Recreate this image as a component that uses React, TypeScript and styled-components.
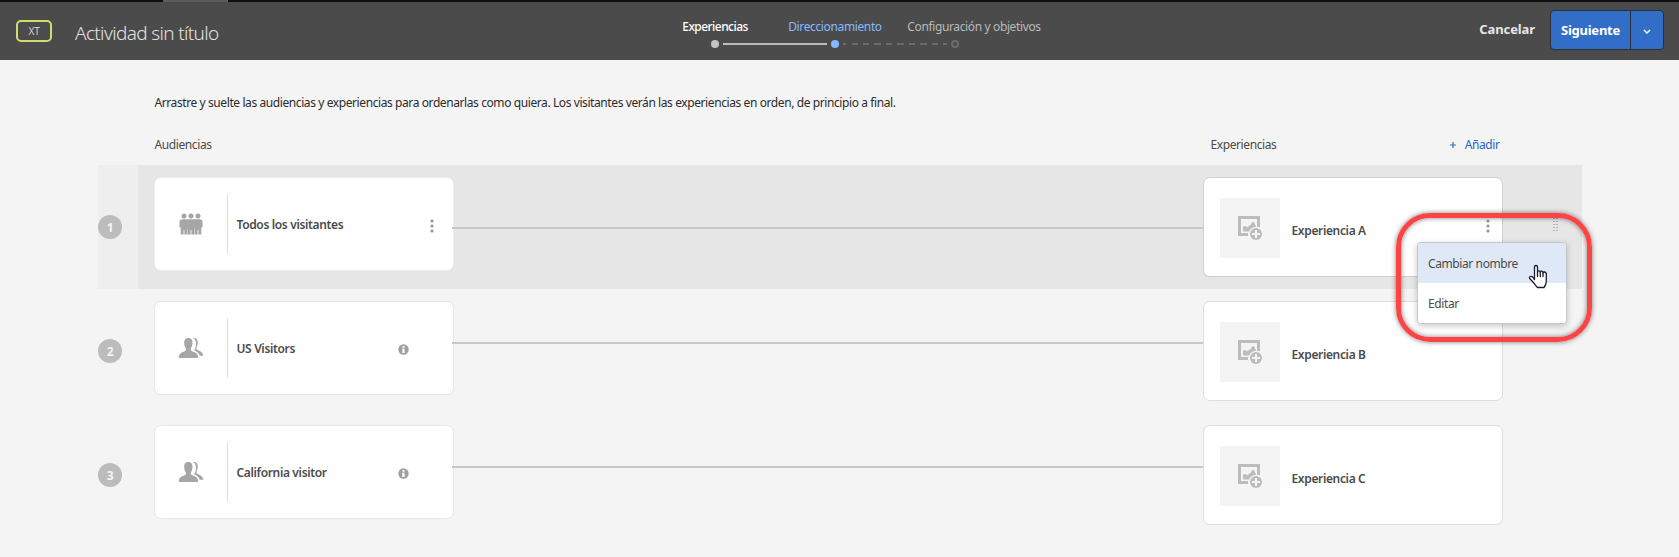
import React from 'react';
import styled, { createGlobalStyle, css } from 'styled-components';

const GlobalStyle = createGlobalStyle`
  * { box-sizing: border-box; }
  body {
    margin: 0;
    background: #f4f4f4;
    color: #4b4b4b;
    font-family: "Noto Sans", "Open Sans", sans-serif;
    font-size: 12px;
    letter-spacing: -0.4px;
    line-height: 18px;
    overflow: hidden;
  }
  button { font: inherit; letter-spacing: inherit; border: 0; background: none; padding: 0; cursor: pointer; }
`;

const Page = styled.div`
  position: relative;
  width: 1679px;
  height: 557px;
  overflow: hidden;
`;

const TabStrip = styled.div`
  height: 2px;
  background: #0e0e0e;
  padding-left: 163px;
`;

const ActiveTab = styled.div`
  width: 65px;
  height: 2px;
  background: #5c5c5c;
`;

const Header = styled.header`
  display: grid;
  grid-template-columns: 655px 360px 1fr;
  height: 58px;
  background: #4b4b4b;
`;

const TitleGroup = styled.div`
  display: flex;
  align-items: flex-start;
  padding: 18px 0 0 16px;
`;

const TypeBadge = styled.span`
  display: flex;
  align-items: center;
  justify-content: center;
  width: 36px;
  height: 22px;
  border: 2px solid #d2dc6e;
  border-radius: 5px;
  color: #d0d0d0;
  font-size: 10px;
  letter-spacing: -0.2px;
`;

const Title = styled.h1`
  margin: 0 0 0 23px;
  color: #e2e2e2;
  font-size: 19px;
  font-weight: 300;
  letter-spacing: -0.65px;
  line-height: 26px;
`;

const Steps = styled.ol`
  display: grid;
  grid-template-columns: repeat(3, 120px);
  margin: 0;
  padding: 16px 0 0;
  list-style: none;
`;

type StepState = 'done' | 'current' | 'pending';
const stepColor = { done: '#ffffff', current: '#83b9ff', pending: '#b9b9b9' };

const Step = styled.li<{ $state: StepState }>`
  display: flex;
  flex-direction: column;
  align-items: center;
  color: ${(p) => stepColor[p.$state]};
  font-weight: ${(p) => (p.$state === 'done' ? 500 : 400)};
  letter-spacing: ${(p) => (p.$state === 'done' ? '-0.55px' : '-0.37px')};
  white-space: nowrap;
`;

const WideLabel = styled.span`
  padding-left: 38px;
`;

const Track = styled.div`
  display: grid;
  grid-template-columns: minmax(0, 1fr) 8px minmax(0, 1fr);
  align-items: center;
  width: 120px;
  height: 8px;
  margin-top: 4px;
`;

const Dot = styled.span<{ $state: StepState }>`
  grid-column: 2;
  grid-row: 1;
  width: 8px;
  height: 8px;
  border-radius: 50%;
  ${(p) =>
    p.$state === 'pending'
      ? css`border: 2px solid #6b6b6b;`
      : css`background: ${p.$state === 'current' ? '#83b9ff' : '#c3c3c3'};`}
`;

const Segment = styled.span<{ $dashed?: boolean }>`
  grid-column: 3;
  grid-row: 1;
  width: 104px;
  height: 2px;
  margin-left: 4px;
  background: ${(p) =>
    p.$dashed
      ? 'repeating-linear-gradient(90deg, #6b6b6b 0 3px, transparent 3px 8.5px, #6b6b6b 8.5px 11.5px)'
      : '#bcbcbc'};
`;

const Actions = styled.div`
  display: flex;
  justify-content: flex-end;
  align-items: flex-start;
  padding: 8px 15px 0 0;
`;

const CancelButton = styled.button`
  height: 40px;
  margin-right: 15px;
  padding-bottom: 2px;
  color: #e6e6e6;
  font-size: 13px;
  font-weight: 700;
  letter-spacing: -0.1px;
`;

const SplitButton = styled.div`
  display: flex;
  width: 114px;
  height: 40px;
  border: 1px solid #2b2f38;
  border-radius: 4px;
  background: #326ec8;
  overflow: hidden;
`;

const NextButton = styled.button`
  width: 80px;
  border-right: 1px solid #2b2f38;
  color: #fff;
  font-size: 13px;
  font-weight: 700;
  letter-spacing: -0.25px;
`;

const NextMenuButton = styled.button`
  display: flex;
  flex: 1;
  align-items: center;
  justify-content: center;
  padding-top: 3px;
`;

const Intro = styled.p`
  margin: 34px 0 0 154.5px;
  color: #2c2c2c;
  letter-spacing: -0.408px;
`;

const ColumnHeads = styled.div`
  display: flex;
  justify-content: space-between;
  width: 1345px;
  margin: 24px 0 11px 154.5px;
`;

const ExperienceHead = styled.div`
  display: flex;
  justify-content: space-between;
  width: 289px;
`;

const AddButton = styled.button`
  display: flex;
  align-items: center;
  gap: 9px;
  color: #2a66c4;
`;

const Rows = styled.main`
  width: 1484px;
  margin-left: 98px;
`;

const Row = styled.section<{ $active?: boolean }>`
  display: grid;
  grid-template-columns: 40px 1fr;
  height: 124px;
  background: ${(p) => (p.$active ? '#eeeeee' : 'transparent')};
`;

const Order = styled.span`
  align-self: center;
  width: 24px;
  height: 24px;
  border-radius: 50%;
  background: #bcbcbc;
  color: #f4f4f4;
  font-weight: 700;
  line-height: 25px;
  text-align: center;
`;

const RowBody = styled.div<{ $active?: boolean }>`
  display: grid;
  grid-template-columns: 300px 749px 300px 1fr;
  align-items: start;
  padding: 12px 0 0 16px;
  background: ${(p) => (p.$active ? '#e6e6e6' : 'transparent')};
`;

const Card = styled.article<{ $active?: boolean }>`
  display: flex;
  border: 1px solid #e6e6e6;
  border-radius: 7px;
  background: #fff;
  font-weight: 600;
  letter-spacing: -0.35px;
`;

const AudienceCard = styled(Card)`
  height: 94px;
  padding: 16px 0;
  ${(p) => p.$active && css`border-color: #ededed;`}
`;

const AudienceIcon = styled.div`
  display: flex;
  justify-content: center;
  width: 73px;
  height: 60px;
  padding-top: 19px;
  border-right: 1px solid #dedede;
`;

const AudienceName = styled.span`
  flex: 1;
  padding: 22px 0 0 8.5px;
`;

const AudienceTool = styled.span<{ $info?: boolean }>`
  padding: ${(p) => (p.$info ? '26px 44px 0 0' : '25px 19px 0 0')};
  line-height: 0;
`;

const ExperienceCard = styled(Card)`
  height: 100px;
  padding: 20px 12px 0 16px;
  border-color: ${(p) => (p.$active ? '#cfcfcf' : '#dedede')};
`;

const Thumb = styled.div`
  width: 60px;
  height: 60px;
  padding: 18px;
  background: #f4f4f4;
`;

const ExperienceName = styled.span`
  flex: 1;
  padding: 24px 0 0 11.5px;
`;

const CardMenu = styled.span`
  margin-top: 21px;
  line-height: 0;
`;

const Connector = styled.div<{ $active?: boolean }>`
  height: 2px;
  margin: ${(p) => (p.$active ? 50 : 41)}px 0 0 -2px;
  background: #c8c8c8;
  z-index: 1;
`;

const Grip = styled.span`
  margin: 41px 0 0 50px;
  line-height: 0;
`;

const Menu = styled.ul`
  position: absolute;
  left: 1417px;
  top: 242px;
  width: 150px;
  height: 82px;
  margin: 0;
  padding: 0;
  list-style: none;
  border: 1px solid #c3c6cb;
  border-radius: 4px;
  background: #fff;
  box-shadow: 0 2px 6px rgba(0, 0, 0, 0.22);
  overflow: hidden;
`;

const MenuItem = styled.li<{ $hover?: boolean }>`
  height: 40px;
  padding: 0 10px;
  line-height: 41px;
  background: ${(p) => (p.$hover ? '#dfe8f7' : '#fff')};
`;

const Highlight = styled.div`
  position: absolute;
  left: 1396px;
  top: 213px;
  width: 196px;
  height: 129px;
  border: 5px solid #fd4444;
  border-radius: 34px;
  box-shadow: 0 0 5px rgba(0, 0, 0, 0.5), inset 0 0 5px rgba(0, 0, 0, 0.5);
`;

const Pointer = styled.svg`
  position: absolute;
  left: 1528px;
  top: 264px;
`;

const EveryoneIcon = () => (
  <svg width="24" height="22" viewBox="0 0 24 22" fill="#a6a6a6">
    <circle cx="5" cy="2.900" r="2.500" />
    <circle cx="12" cy="2.900" r="2.500" />
    <circle cx="19" cy="2.900" r="2.500" />
    <path d="M3 6.200h18Q23.500 6.500 23.500 8.500V14.500H22.300V21.500h-2.900V17h-.8v4.500h-2.900V16l-.2-1-.2 1v5.500h-2.900V17h-.8v4.500H8.700V16l-.2-1-.2 1v5.500H5.400V17h-.8v4.500H1.700V14.500H.5V8.500Q.5 6.500 3 6.200z" />
  </svg>
);

const SegmentIcon = () => (
  <svg width="26" height="22" viewBox="0 0 26 22" fill="#a6a6a6">
    <path d="M15.200 1C18.600.6 20 2.800 19.800 6c-.1 2-.7 3.300-1.300 4.500-.3 1.500 0 2 1.200 2.600 3.300 1.400 5.300 2.700 5.700 5.700h-3.600c-.8-2.600-2.500-3.900-4.600-4.900-.8-.5-.9-1.100-.5-1.700 1.200-1.700 1.300-3.800 1.200-6.200-.1-2.100-.9-3.900-2.700-5z" />
    <path d="M10.300 1c3.100 0 4.300 2.100 4.200 5.200-.1 2.200-.8 3.900-1.600 5-.4 1.900-.1 2.500 1.300 3 3.800 1.200 5.900 2.400 6 6.800H.8c.1-4.400 2.200-5.600 5.800-6.800 1.300-.5 1.600-1.100 1.200-3-.9-1.100-1.500-2.800-1.600-5C6.100 3.100 7.200 1 10.300 1z" />
  </svg>
);

const KebabIcon = () => (
  <svg width="4" height="14" viewBox="0 0 4 14" fill="#959595">
    <circle cx="2" cy="2" r="1.600" />
    <circle cx="2" cy="7" r="1.600" />
    <circle cx="2" cy="12" r="1.600" />
  </svg>
);

const InfoIcon = () => (
  <svg width="11" height="11" viewBox="0 0 11 11">
    <circle cx="5.500" cy="5.500" r="5.200" fill="#a0a0a0" />
    <path d="M4.500 2h2v1.700h-2zM4 4.700h2.500v3.100H7v1H4v-1h.5V5.700H4z" fill="#fff" />
  </svg>
);

const AddImageIcon = () => (
  <svg width="25" height="24" viewBox="0 0 25 24" fill="#bcbcbc">
    <path d="M0 0h22v11h-3V3H3v14h7v3H0z" />
    <path d="M5 11q2-2 3.500-.3 1.200 1 2.500-.7l2-1.500q.3-2.500 2.200-2.500 2 0 1.800 2.500l1 1.500v2l-6 3.500H5z" />
    <circle cx="18" cy="18" r="7.300" fill="#f4f4f4" />
    <circle cx="18" cy="18" r="6" />
    <path d="M17 14h2v3h3v2h-3v3h-2v-3h-3v-2h3z" fill="#f4f4f4" />
  </svg>
);

const GripIcon = () => (
  <svg width="5" height="14" viewBox="0 0 5 14" fill="#b4b4b4">
    {[0, 3, 6, 9, 12].map((y) => (
      <React.Fragment key={y}>
        <rect x="0" y={y} width="2" height="1" />
        <rect x="3" y={y} width="2" height="1" />
      </React.Fragment>
    ))}
  </svg>
);

const rows = [
  { audience: 'Todos los visitantes', experience: 'Experiencia A', everyone: true, active: true },
  { audience: 'US Visitors', experience: 'Experiencia B' },
  { audience: 'California visitor', experience: 'Experiencia C' },
];

export default function App() {
  return (
    <Page>
      <GlobalStyle />
      <TabStrip>
        <ActiveTab />
      </TabStrip>
      <Header>
        <TitleGroup>
          <TypeBadge>XT</TypeBadge>
          <Title>Actividad sin título</Title>
        </TitleGroup>
        <Steps>
          <Step $state="done">
            Experiencias
            <Track><Dot $state="done" /><Segment /></Track>
          </Step>
          <Step $state="current">
            Direccionamiento
            <Track><Dot $state="current" /><Segment $dashed /></Track>
          </Step>
          <Step $state="pending">
            <WideLabel>Configuración y objetivos</WideLabel>
            <Track><Dot $state="pending" /></Track>
          </Step>
        </Steps>
        <Actions>
          <CancelButton>Cancelar</CancelButton>
          <SplitButton>
            <NextButton>Siguiente</NextButton>
            <NextMenuButton aria-label="Más opciones">
              <svg width="8" height="6" viewBox="0 0 8 6" fill="none" stroke="#fff" strokeWidth="1.500">
                <path d="M1 1l3 3 3-3" />
              </svg>
            </NextMenuButton>
          </SplitButton>
        </Actions>
      </Header>

      <Intro>
        Arrastre y suelte las audiencias y experiencias para ordenarlas como quiera. Los visitantes verán las
        experiencias en orden, de principio a final.
      </Intro>
      <ColumnHeads>
        <span>Audiencias</span>
        <ExperienceHead>
          <span>Experiencias</span>
          <AddButton>
            <svg width="6" height="6" viewBox="0 0 6 6" fill="#326ec8">
              <path d="M2.400 0h1.200v2.400H6v1.200H3.600V6H2.400V3.600H0V2.400h2.400z" />
            </svg>
            Añadir
          </AddButton>
        </ExperienceHead>
      </ColumnHeads>

      <Rows>
        {rows.map((row, i) => (
          <Row key={row.audience} $active={row.active}>
            <Order>{i + 1}</Order>
            <RowBody $active={row.active}>
              <AudienceCard $active={row.active}>
                <AudienceIcon>{row.everyone ? <EveryoneIcon /> : <SegmentIcon />}</AudienceIcon>
                <AudienceName>{row.audience}</AudienceName>
                <AudienceTool $info={!row.everyone}>{row.everyone ? <KebabIcon /> : <InfoIcon />}</AudienceTool>
              </AudienceCard>
              <Connector $active={row.active} />
              <ExperienceCard $active={row.active}>
                <Thumb><AddImageIcon /></Thumb>
                <ExperienceName>{row.experience}</ExperienceName>
                {row.active && <CardMenu><KebabIcon /></CardMenu>}
              </ExperienceCard>
              {row.active && <Grip><GripIcon /></Grip>}
            </RowBody>
          </Row>
        ))}
      </Rows>

      <Highlight />
      <Menu>
        <MenuItem $hover>Cambiar nombre</MenuItem>
        <MenuItem>Editar</MenuItem>
      </Menu>
      <Pointer width="20" height="26" viewBox="0 0 20 26" fill="#fff" stroke="#1c1c2c" strokeWidth="1.300" strokeLinejoin="round" strokeLinecap="round">
        <path d="M6.500 15.500V3.200Q6.500 1.500 8 1.500T9.500 3.200V8q0-1.300 1.400-1.200T12.300 8.200q.2-1.200 1.500-1T15 9q.2-1.200 1.500-1t1.800 1.500V17q0 3.500-2.300 6.500h-6.500Q8 22 6.500 19.800L1.700 14.500Q1 13 2.300 12.500t2.400.7z" />
        <path d="M9.500 8v4.500M12.300 8.500v4M15 9v3.500" fill="none" />
      </Pointer>
    </Page>
  );
}
